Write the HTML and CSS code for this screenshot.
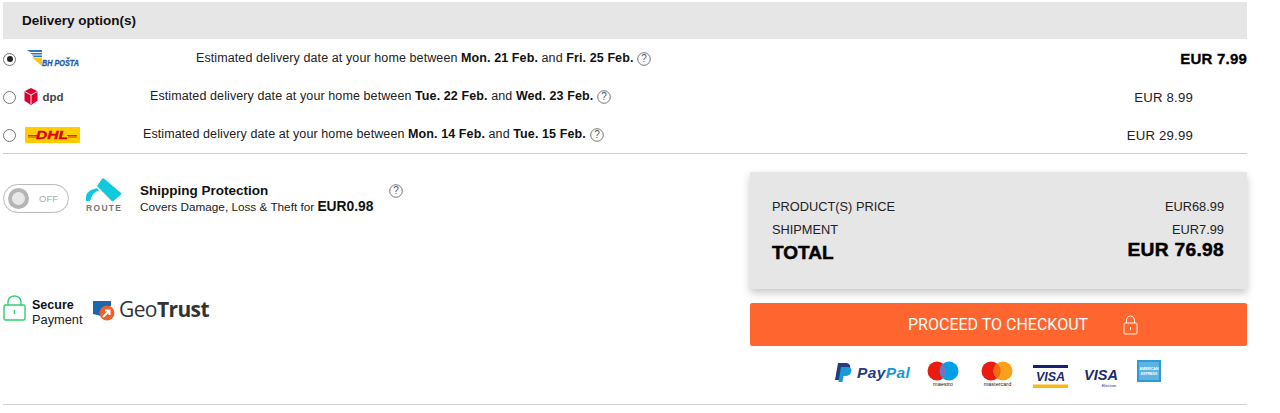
FILE: index.html
```html
<!DOCTYPE html>
<html lang="en">
<head>
<meta charset="utf-8">
<title>Delivery options</title>
<link rel="stylesheet" href="styles.css">
</head>
<body>
<main class="page">
  <h2 class="head">Delivery option(s)</h2>
  <section class="options">
    <div class="row">
      <span class="radio on"></span>
      <svg class="logo logo-bh" width="62" height="18" viewBox="0 0 62 18">
        <path d="M1 0h15v2H4zM4 3h12v1.500H6.500zM6 5.500h10V7H8z" fill="#2a77c4"/>
        <path d="M6 7.500h10V16z" fill="#f7c51e"/>
        <text x="16" y="16" class="bh-text" textLength="37" lengthAdjust="spacingAndGlyphs">BH POŠTA</text>
      </svg>
      <p class="est est-1">Estimated delivery date at your home between <b>Mon. 21 Feb.</b> and <b>Fri. 25 Feb.</b></p>
      <svg class="help" width="14" height="14" viewBox="0 0 14 14"><circle cx="7" cy="7" r="6.300"/><text x="7" y="10.400">?</text></svg>
      <span class="price price-strong">EUR 7.99</span>
    </div>
    <div class="row">
      <span class="radio"></span>
      <svg class="logo logo-dpd" width="44" height="17" viewBox="0 0 44 17">
        <path d="M7 0l6.500 3.300v9.500L7 17 .5 12.800V3.300z" fill="#dc0032"/>
        <path d="M.8 3.700L7 7l6.300-3.300M7 7v9" stroke="#fff" stroke-width=".9" fill="none"/>
        <text x="18.500" y="12.500" class="dpd-text">dpd</text>
      </svg>
      <p class="est est-2">Estimated delivery date at your home between <b>Tue. 22 Feb.</b> and <b>Wed. 23 Feb.</b></p>
      <svg class="help" width="14" height="14" viewBox="0 0 14 14"><circle cx="7" cy="7" r="6.300"/><text x="7" y="10.400">?</text></svg>
      <span class="price">EUR 8.99</span>
    </div>
    <div class="row">
      <span class="radio"></span>
      <svg class="logo logo-dhl" width="55" height="16" viewBox="0 0 55 16">
        <rect width="55" height="16" fill="#fc0"/>
        <path d="M3 8.500h10M3 10h9M42 8.500h10M43 10h9" stroke="#d40511" stroke-width=".8"/>
        <text x="11" y="11.500" class="dhl-text" textLength="32" lengthAdjust="spacingAndGlyphs">DHL</text>
      </svg>
      <p class="est est-3">Estimated delivery date at your home between <b>Mon. 14 Feb.</b> and <b>Tue. 15 Feb.</b></p>
      <svg class="help" width="14" height="14" viewBox="0 0 14 14"><circle cx="7" cy="7" r="6.300"/><text x="7" y="10.400">?</text></svg>
      <span class="price">EUR 29.99</span>
    </div>
  </section>

  <section class="bottom">
    <div class="left">
      <div class="protect">
        <div class="toggle"><span class="knob"></span><span class="off">OFF</span></div>
        <svg class="route" width="37" height="36" viewBox="0 0 37 36">
          <path d="M12 8L17 1c.5-.8 1.500-.8 2.200-.2L36 15c.6.500.6 1 0 1.600L28.500 23c-.6.500-1.200.5-1.800 0z" fill="#12c9dc"/>
          <path d="M1 23v-4c0-4 4-7 8-8l3-1 2 2.500c-4 1-7 4-8 8-.6 2-1 2.500-2.500 2.500z" fill="#12c9dc"/>
          <text x="1" y="33" class="route-text" textLength="35">ROUTE</text>
        </svg>
        <div class="protect-text">
          <strong>Shipping Protection</strong>
          <span>Covers Damage, Loss &amp; Theft for <b>EUR0.98</b></span>
        </div>
        <svg class="help help-protect" width="14" height="14" viewBox="0 0 14 14"><circle cx="7" cy="7" r="6.300"/><text x="7" y="10.400">?</text></svg>
      </div>
      <div class="secure">
        <svg width="23" height="26" viewBox="0 0 23 26" class="lock-green">
          <rect x="1" y="10" width="21" height="15" rx="1.500"/>
          <path d="M5 10V6.500a6.500 5.500 0 0 1 13 0V10M11.500 15v4"/>
        </svg>
        <div class="secure-text"><b>Secure</b><span>Payment</span></div>
        <svg class="geo" width="132" height="34" viewBox="0 -5 132 34">
          <path d="M1 2h18v5c-5 0-9 3-10 10l-8-2z" fill="#1d66ab"/>
          <circle cx="15" cy="14" r="7.500" fill="#e8632b"/>
          <path d="M11 18l6-6m-4-.500h4.500V16" stroke="#fff" stroke-width="2" fill="none"/>
          <text x="27" y="18" class="geo-text">Geo<tspan class="geo-bold">Trust</tspan></text>
          <circle cx="116.500" cy="8" r=".8" fill="#888"/>
        </svg>
      </div>
    </div>
    <div class="right">
      <div class="summary">
        <div class="line"><span>PRODUCT(S) PRICE</span><span>EUR68.99</span></div>
        <div class="line"><span>SHIPMENT</span><span>EUR7.99</span></div>
        <div class="line total"><span class="total-label">TOTAL</span><span class="total-value">EUR 76.98</span></div>
      </div>
      <a class="checkout" href="#">
        <span>PROCEED TO CHECKOUT</span>
        <svg width="15" height="20" viewBox="0 0 15 20"><rect x="1" y="8" width="13" height="11" rx="1"/><path d="M3.500 8V5a4 4 0 0 1 8 0v3M7.500 12v3"/></svg>
      </a>
      <div class="pay">
        <svg width="77" height="20" viewBox="0 0 77 20" class="pp">
          <path d="M3 0h7c4 0 6 2 5 5.500-.8 3.500-3.500 5-7 5H6L5 17H0z" fill="#253b80"/>
          <path d="M6 4h6c3 0 5 1.500 4.300 4.500-.8 3-3 4.500-6 4.500H8.500l-1 6H3.500z" fill="#179bd7"/>
          <text x="22" y="15" class="pp-text pp-dark">Pay<tspan class="pp-light">Pal</tspan></text>
        </svg>
        <svg width="33" height="26" viewBox="0 0 33 26" class="card-maestro">
          <circle cx="10" cy="10" r="9.500" fill="#eb1c0f"/>
          <circle cx="22" cy="10" r="9.500" fill="#00a0e8"/>
          <path d="M16 3a9.500 9.500 0 0 1 0 14 9.500 9.500 0 0 1 0-14z" fill="#7673c0"/>
          <text x="16" y="25" class="mini">maestro</text>
        </svg>
        <svg width="33" height="26" viewBox="0 0 33 26" class="card-mc">
          <circle cx="10" cy="10" r="9.500" fill="#eb1c0f"/>
          <circle cx="22" cy="10" r="9.500" fill="#f9a01c"/>
          <path d="M16 2.500a9.500 9.500 0 0 1 0 15 9.500 9.500 0 0 1 0-15z" fill="#f26a10"/>
          <text x="16.500" y="25" class="mini">mastercard</text>
        </svg>
        <svg width="35" height="23" viewBox="0 0 35 23" class="card-visa">
          <rect width="35" height="3" fill="#1a1f71"/>
          <rect y="19.500" width="35" height="3.500" fill="#fbb812"/>
          <text x="17.500" y="16" class="visa-text">VISA</text>
        </svg>
        <svg width="36" height="23" viewBox="0 0 36 23" class="card-electron">
          <text x="18" y="14" class="visa-big">VISA</text>
          <text x="26" y="21" class="electron">Electron</text>
        </svg>
        <svg width="25" height="23" viewBox="0 0 25 23" class="card-amex">
          <rect width="24" height="22" fill="#2f9bd6"/>
          <rect x="2" y="2" width="20" height="18" fill="#5db4e2"/>
          <text x="12" y="10" class="amex">AMERICAN</text>
          <text x="12" y="15" class="amex">EXPRESS</text>
        </svg>
      </div>
    </div>
  </section>
  <hr class="end">
</main>
</body>
</html>
```

FILE: styles.css
```css
* { box-sizing: border-box; }
body {
  margin: 0;
  background: #fff;
  color: #222;
  font-family: "Liberation Sans", Arial, sans-serif;
  font-size: 12px;
}
.page { padding: 2px 33px 0 3px; height: 413px; overflow: hidden; }
.head {
  margin: 0;
  height: 37px;
  background: #e6e6e6;
  font-size: 13.500px;
  font-weight: bold;
  line-height: 37px;
  padding-left: 19px;
  color: #111;
}
.options { border-bottom: 1px solid #ccc; height: 115px; }
.row { display: flex; align-items: center; height: 38px; }
.radio {
  flex: none;
  width: 13px;
  height: 13px;
  border: 1px solid #767676;
  border-radius: 50%;
  margin: 2px 0 0 0;
  display: flex;
  align-items: center;
  justify-content: center;
}
.radio.on::after {
  content: "";
  width: 6px;
  height: 6px;
  border-radius: 50%;
  background: #222;
}
.logo { flex: none; margin-top: 1px; }
.logo-bh { margin-left: 10px; }
.logo-dpd { margin-left: 8px; }
.logo-dhl { margin-left: 9px; }
.bh-text { font: italic bold 8.500px "Liberation Sans", sans-serif; fill: #1b5ea8; stroke: #1b5ea8; stroke-width: .3px; }
.dpd-text { font: bold 11.500px "Liberation Sans", sans-serif; fill: #444; }
.dhl-text { font: italic bold 10px "Liberation Sans", sans-serif; fill: #d40511; stroke: #d40511; stroke-width: .3px; }
.est { margin: 0; font-size: 12.500px; white-space: nowrap; letter-spacing: .1px; color: #222; }
.est b { color: #111; }
.est-1 { margin-left: 108px; }
.est-2 { margin-left: 82px; }
.est-3 { margin-left: 63px; }
.help { flex: none; margin-left: 4px; margin-top: 1px; }
.help circle { fill: none; stroke: #777; stroke-width: 1; }
.help text { font: 10px "Liberation Sans", sans-serif; fill: #555; text-anchor: middle; }
.price { margin-left: auto; margin-right: 54px; padding-top: 2px; font-size: 13.200px; letter-spacing: .2px; }
.price-strong { margin-right: 0; padding-top: 0; font-size: 15px; font-weight: bold; color: #000; -webkit-text-stroke: .3px #000; }
.bottom { display: flex; }
.left { flex: 1; padding-top: 30px; }
.protect { display: flex; align-items: flex-start; }
.toggle {
  flex: none;
  width: 66px;
  height: 29px;
  border: 1px solid #bbb;
  border-radius: 15px;
  display: flex;
  align-items: center;
  padding-left: 4px;
  box-shadow: inset 0 0 1px #ccc;
}
.knob {
  width: 21px;
  height: 21px;
  border-radius: 50%;
  background: #e8e8e8;
  border: 4px solid #b5b5b5;
}
.off { margin-left: 10px; font-size: 9.500px; color: #aaa; }
.route { flex: none; margin: -6px 0 0 16px; }
.route-text { font: bold 8.500px "Liberation Sans", sans-serif; fill: #777; }
.protect-text { margin: -1px 0 0 18px; display: flex; flex-direction: column; width: 249px; }
.protect-text strong { font-size: 13.500px; line-height: 15px; color: #111; }
.protect-text span { font-size: 11.750px; line-height: 17px; color: #222; }
.protect-text b { font-size: 13.800px; color: #111; }
.help-protect { margin: 0; }
.secure { display: flex; align-items: flex-start; margin-top: 81px; }
.lock-green { flex: none; margin-top: -1px; fill: none; stroke: #2fd070; stroke-width: 1.400; }
.secure-text { margin-left: 6px; display: flex; flex-direction: column; font-size: 12.800px; line-height: 14.500px; margin-top: 2px; }
.secure-text b { font-size: 12.500px; color: #111; }
.geo { flex: none; margin: -2px 0 0 9px; }
.geo-text { font: 21px "Open Sans", "Liberation Sans", sans-serif; fill: #333; letter-spacing: -.6px; }
.geo-bold { font-weight: bold; }
.right { flex: none; width: 497px; padding-top: 18px; }
.summary {
  height: 117px;
  background: #e6e6e6;
  box-shadow: 0 4px 8px rgba(0,0,0,.22);
  padding: 24px 23px 0 22px;
}
.line { display: flex; justify-content: space-between; font-size: 12.800px; line-height: 22.500px; color: #222; }
.total { align-items: flex-start; line-height: 20px; }
.total-label { font-size: 19px; font-weight: bold; color: #000; -webkit-text-stroke: .5px #000; margin-top: 2px; }
.total-value { font-size: 19.200px; font-weight: bold; color: #000; -webkit-text-stroke: .5px #000; letter-spacing: .3px; margin-top: -1px; }
.checkout {
  margin-top: 14px;
  height: 43px;
  background: #ff652e;
  border-radius: 2px;
  display: flex;
  align-items: center;
  color: #fff;
  text-decoration: none;
  font-family: Roboto, "Liberation Sans", sans-serif;
  font-size: 16px;
  padding-left: 158px;
}
.checkout svg { margin-left: 35px; fill: none; stroke: #fff0e8; stroke-width: 1; }
.pay { display: flex; align-items: flex-start; margin-top: 15px; padding-left: 85px; }
.pp { margin-top: 2px; }
.pp-text { font: italic bold 15.500px "Liberation Sans", sans-serif; letter-spacing: .4px; }
.pp-dark { fill: #253b80; }
.pp-light { fill: #179bd7; }
.mini { font: 5.500px "Liberation Sans", sans-serif; fill: #222; text-anchor: middle; }
.card-maestro { margin-left: 15px; }
.card-mc { margin-left: 21px; }
.card-visa { margin-left: 19px; margin-top: 4px; }
.card-electron { margin-left: 15px; margin-top: 5px; }
.card-amex { margin-left: 18px; margin-top: -1px; }
.visa-text { font: italic bold 12.500px "Liberation Sans", sans-serif; fill: #1a2a6c; text-anchor: middle; }
.visa-big { font: italic bold 14.500px "Liberation Sans", sans-serif; fill: #1a2a6c; text-anchor: middle; }
.electron { font: 4px "Liberation Sans", sans-serif; fill: #1a2a6c; text-anchor: middle; }
.amex { font: bold 3.500px "Liberation Sans", sans-serif; fill: #fff; text-anchor: middle; }
.end { margin: 15px 0 0; border: 0; border-top: 1px solid #d2d2d2; }
```
